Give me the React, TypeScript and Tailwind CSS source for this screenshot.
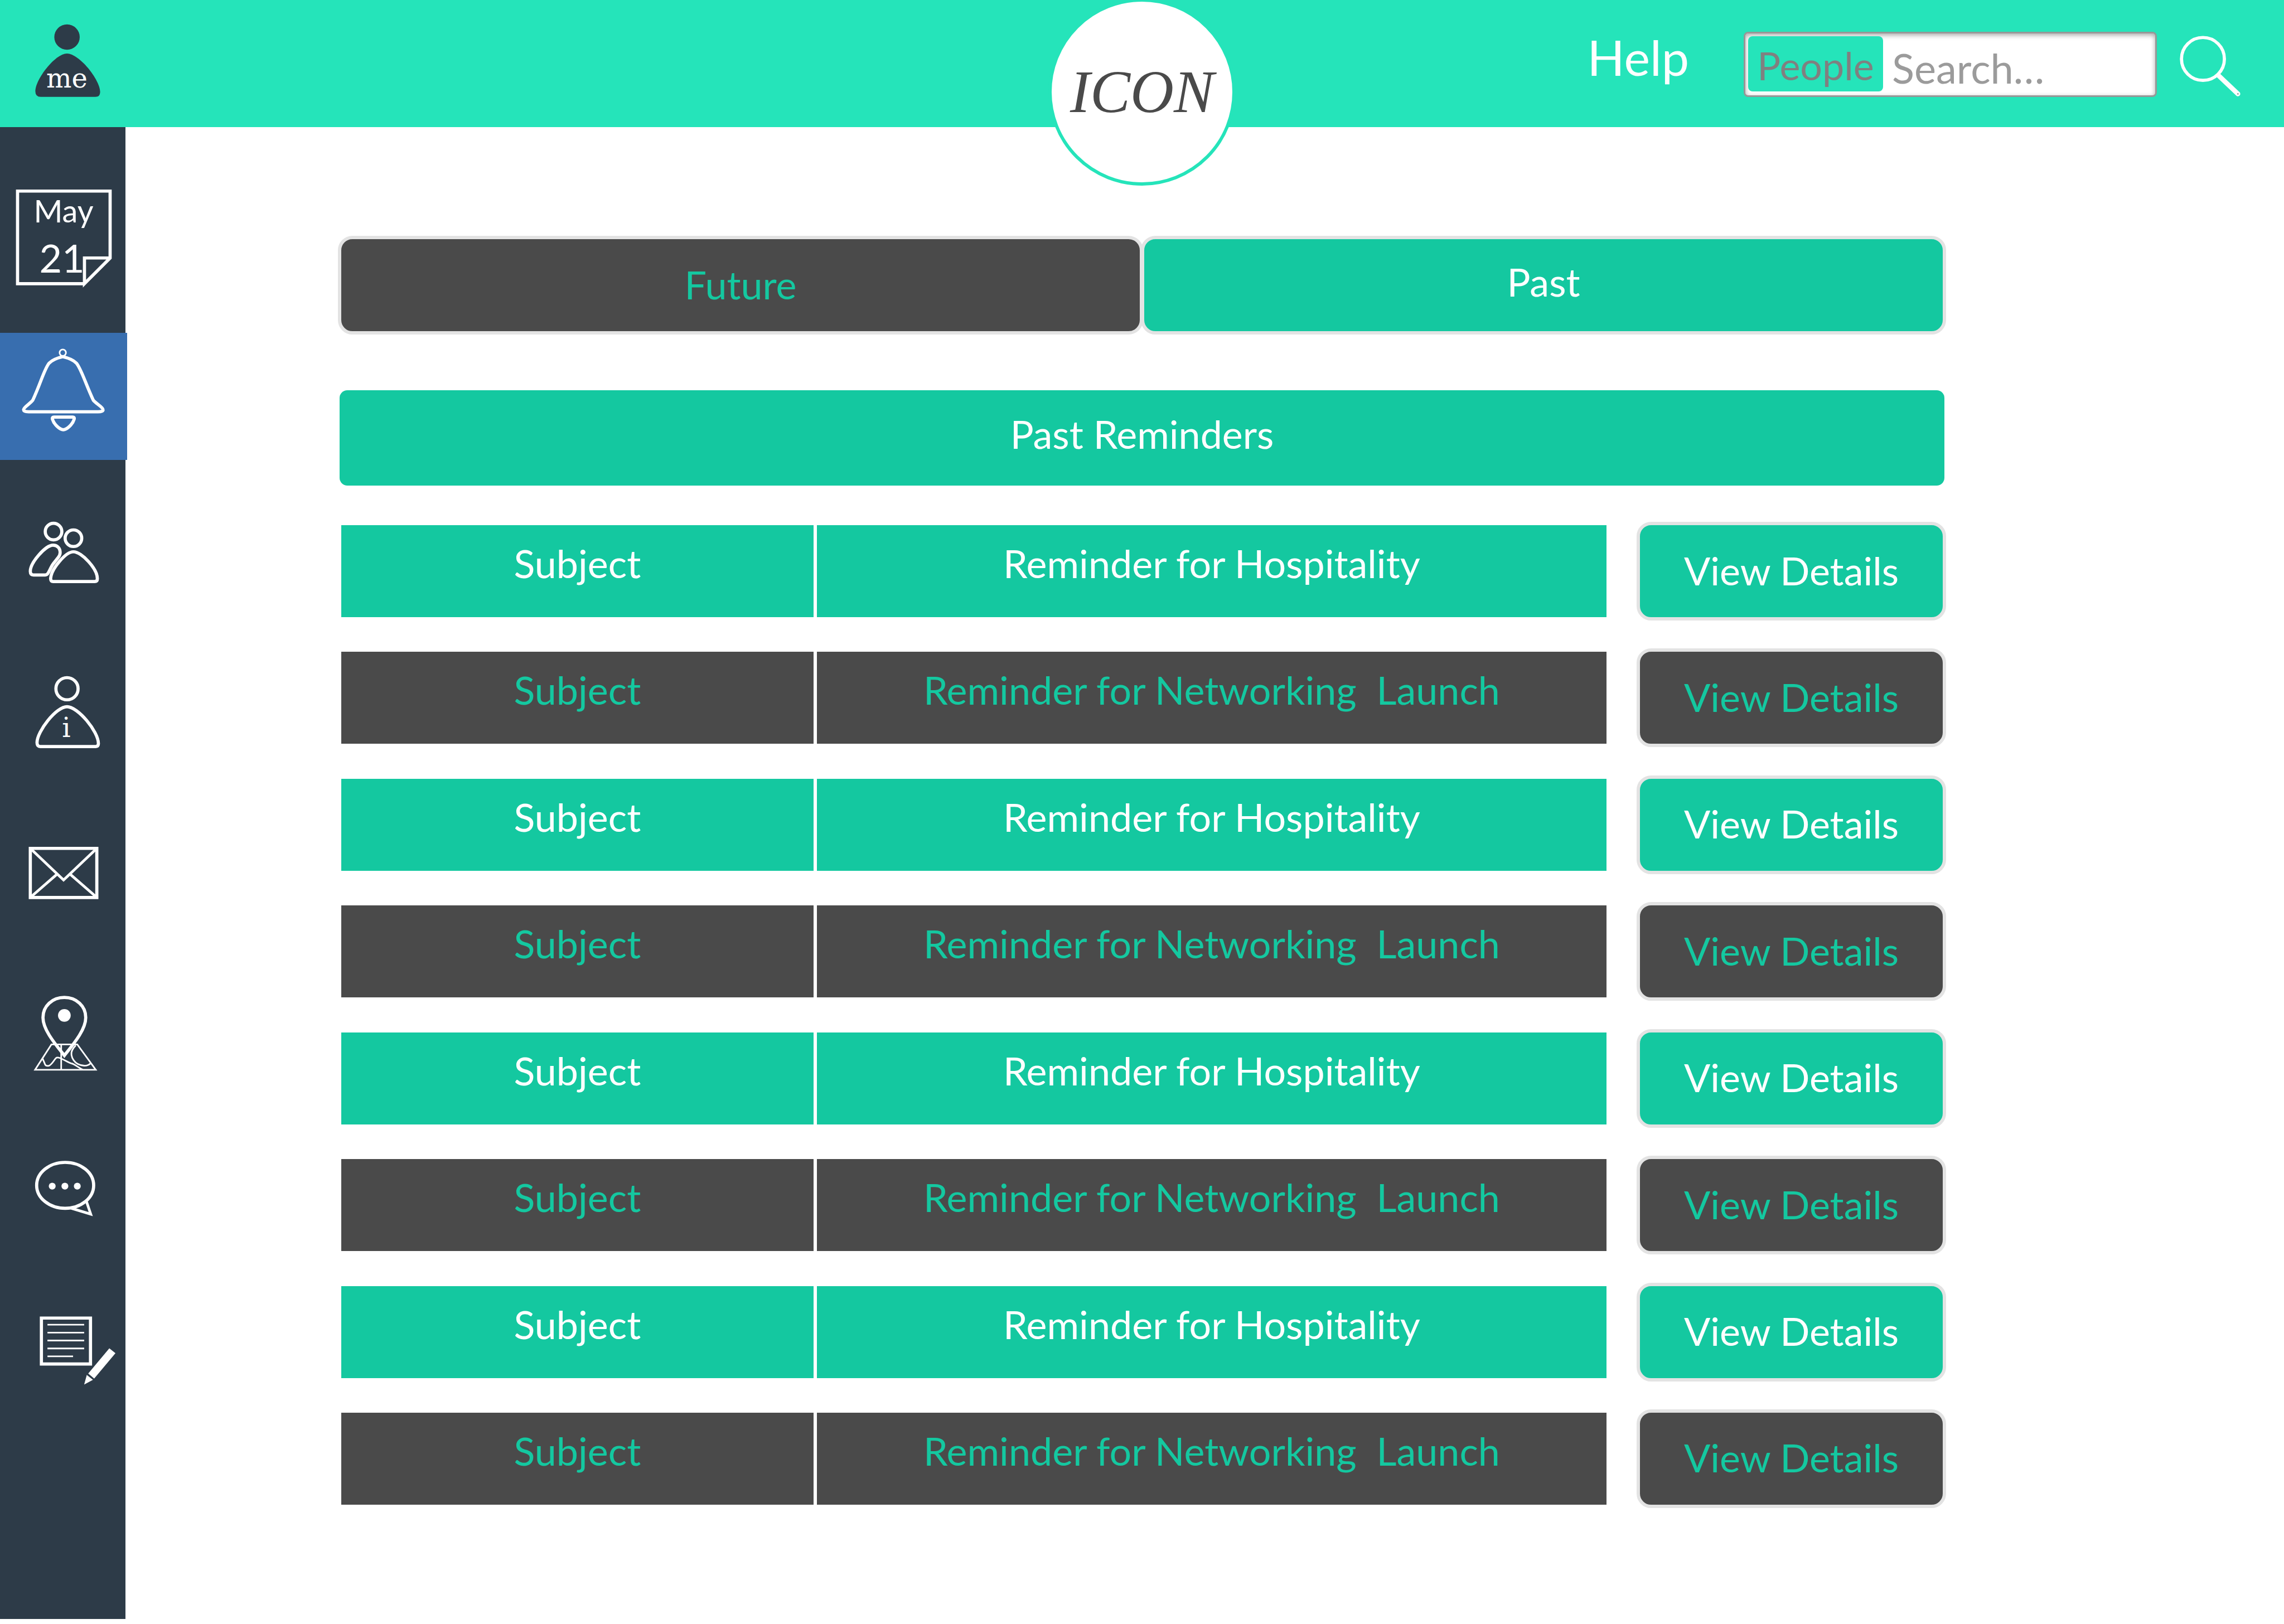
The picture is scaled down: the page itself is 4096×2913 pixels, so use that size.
import type { ReactNode } from "react";

const FUTURE = "bg-[#4a4a4a] text-[#14c8a0]";
const PAST = "bg-[#14c8a0] text-white";

const rows = Array.from({ length: 8 }, (_, i) => ({
  id: i,
  subject: "Subject",
  title: i % 2 === 0 ? "Reminder for Hospitality" : "Reminder for Networking\u00a0 Launch",
  tone: i % 2 === 0 ? PAST : FUTURE,
}));

function Icon({ box, className, children }: { box: string; className: string; children: ReactNode }) {
  return (
    <svg viewBox={box} className={className} fill="none" stroke="white" strokeWidth={6} aria-hidden="true">
      {children}
    </svg>
  );
}

function NavItem({ label, active, children }: { label: string; active?: boolean; children: ReactNode }) {
  return (
    <li className={active ? "relative h-[228px] w-[228px] bg-[#386eaf]" : "relative h-[284px] w-[228px]"}>
      <button type="button" aria-label={label} className="block h-full w-full">
        {children}
      </button>
    </li>
  );
}

function Sidebar() {
  return (
    <nav className="mb-[9px] w-[225px] shrink-0 bg-[#2d3b48]" aria-label="Main">
      <ul className="flex flex-col">
        <li className="relative h-[369px] w-[228px]">
          <button type="button" aria-label="May 21" className="block h-full w-full">
            <Icon box="0 242 240 389" className="h-[369px] w-[228px]">
              <path d="M159.5 538H33V363H208V489.5L159.5 538V489.5H208" />
            </Icon>
            <span className="absolute top-[118px] left-0 w-[228px] text-center text-[56px] leading-[64px] text-white">May</span>
            <span className="absolute top-[194px] left-0 w-[222px] text-center text-[70px] leading-[80px] text-white">21</span>
          </button>
        </li>
        <NavItem label="Reminders" active>
          <Icon box="0 630 240 240" className="h-[228px] w-[228px]">
            <circle cx="118.5" cy="667.5" r="6" strokeWidth={3} />
            <path d="M118.5 675C110 677 99 681 93 687C84 697 77 725 62 757C58 763 45 770 44.500 775Q44.500 779 54 779H185Q195 779 194.500 775C194 770 180 763 176 757C161 725 153 697 144 687C138 681 127 677 118.500 675Z" />
            <path d="M102 789H137Q141 789 140 793C137 803 126 813 119.500 813C113 813 102 803 99 793Q98 789 102 789Z" />
          </Icon>
        </NavItem>
        <NavItem label="People">
          <Icon box="0 870 240 300" className="h-[284px] w-[228px]">
            <circle cx="101" cy="1005.700" r="15.700" />
            <circle cx="138.700" cy="1018.300" r="15.700" />
            <path d="M138.700 1044C154 1044 184 1076 184 1095Q184 1100.500 179 1100.500H100.500Q95.500 1100.500 95.500 1094.500C97 1076 124 1044 138.700 1044Z" />
            <path d="M100 1031.500C86 1031.500 57 1064 57 1081Q57 1088 63 1088H85Q89 1088 91 1084C95 1077 97 1071 101 1066L110 1054.500Q113.500 1050 113.500 1045.500C113.500 1037 108 1031.500 100 1031.500Z" />
          </Icon>
        </NavItem>
        <NavItem label="Information">
          <Icon box="0 1169.500 240 300" className="h-[284px] w-[228px]">
            <circle cx="126.500" cy="1303" r="21" />
            <path d="M126.500 1337C147 1337 186 1384 186 1407Q186 1412.500 181 1412.500H76Q69.700 1412.500 69.700 1405C69.700 1384 106 1337 126.500 1337Z" />
          </Icon>
          <span className="absolute top-[164px] left-[109px] w-[20px] text-center font-['DejaVu_Serif'] text-[48px] leading-[64px] text-white">i</span>
        </NavItem>
        <NavItem label="Messages">
          <Icon box="0 1469 240 300" className="h-[284px] w-[228px]">
            <path d="M57 1605H183V1698H57Z" />
            <path d="M57 1605L120 1665L183 1605M57 1698L107.500 1654M183 1698L132.500 1654" strokeWidth={5} />
          </Icon>
        </NavItem>
        <NavItem label="Map">
          <Icon box="0 1768.500 240 300" className="h-[284px] w-[228px]">
            <path d="M121.500 1887C99 1887 81 1903 81 1925C81 1948 104 1975 121.500 1997C139 1975 162 1948 162 1925C162 1903 144 1887 121.500 1887Z" />
            <circle cx="121.500" cy="1921" r="12" fill="white" stroke="none" />
            <path
              strokeWidth={3}
              d="M97 1976H146L181 2024H66ZM115.500 1976V2024M80 2002L85 2014Q87 2018 93 2016C99 2013 103 2003 107 2001C113 1999 127 2010 135 2012C141 2013 149 2021 157 2024M143 1978C137 1984 134 1991 135 1996C136 2003 141 2010 147 2013C153 2016 164 2019 171 2012"
            />
          </Icon>
        </NavItem>
        <NavItem label="Chat">
          <Icon box="0 2068 240 300" className="h-[284px] w-[228px]">
            <ellipse cx="123" cy="2242.500" rx="54" ry="43.500" />
            <path d="M135 2286L171.500 2297L163 2272" strokeWidth={5} />
            <g fill="white" stroke="none">
              <circle cx="98.500" cy="2244" r="6.500" />
              <circle cx="122.500" cy="2244" r="6.500" />
              <circle cx="146" cy="2244" r="6.500" />
            </g>
          </Icon>
        </NavItem>
        <NavItem label="Notes">
          <Icon box="0 2367 240 300" className="h-[284px] w-[228px]">
            <path d="M78 2493H171V2580H78Z" />
            <path strokeWidth={3} d="M89.500 2505.500H159M89.500 2520.500H159M89.500 2535.500H159M89.500 2550.500H159M89.500 2565.500H138" />
            <path fill="white" stroke="none" d="M206.700 2550.300L218.300 2559.500L178 2607.700L166.700 2598ZM164 2600.800L175.700 2610L159 2619Z" />
          </Icon>
        </NavItem>
      </ul>
    </nav>
  );
}

function Header() {
  return (
    <header className="relative flex h-[228px] shrink-0 items-start justify-between bg-[#25e4ba]">
      <button type="button" aria-label="My profile" className="relative h-[228px] w-[228px]">
        <svg viewBox="0 0 240 240" className="h-[228px] w-[228px] fill-[#2d3b48]" aria-hidden="true">
          <circle cx="126.500" cy="70" r="24" />
          <path d="M126.500 101C149 101 189 150 189 174Q189 183 180 183H77Q66.700 183 66.700 172C66.700 150 104 101 126.500 101Z" />
        </svg>
        <span className="absolute top-[108px] left-[80px] w-[80px] text-center font-['DejaVu_Serif'] text-[48px] leading-[64px] text-white">me</span>
      </button>

      <div className="absolute -top-[3px] left-1/2 z-10 flex size-[336px] -translate-x-1/2 items-center justify-center rounded-full border-[6px] border-[#25e4ba] bg-white">
        <span className="font-['Liberation_Serif'] text-[108px] leading-[120px] text-[#4a4a4a] italic">ICON</span>
      </div>

      <div className="flex items-start pr-[76px]">
        <a href="#help" className="mt-[46px] mr-[98px] text-[88px] leading-[112px] text-white">
          Help
        </a>
        <form className="mt-[57px] flex h-[117px] w-[741px] items-start rounded-[8px] border-[3px] border-[#979797] bg-white p-[5px] shadow-[inset_0_3px_8px_rgba(0,0,0,0.35)]">
          <button type="button" className="h-[99px] w-[242px] shrink-0 rounded-[8px] bg-[#25e4ba] pt-[6px] text-[70px] leading-[93px] text-[#808080]">
            People
          </button>
          <input
            type="text"
            aria-label="Search"
            placeholder="Search…"
            className="ml-[16px] h-[99px] min-w-0 flex-1 bg-transparent pt-[14px] text-[74px] text-[#9b9b9b] outline-none placeholder:text-[#9b9b9b] placeholder:opacity-100"
          />
        </form>
        <button type="button" aria-label="Run search" className="mt-[62px] ml-[38px]">
          <svg viewBox="4120 65 120 120" className="size-[114px]" fill="none" stroke="white" aria-hidden="true">
            <circle cx="4167" cy="111" r="40.500" strokeWidth={6} />
            <path d="M4196 142L4233 177" strokeWidth={9} strokeLinecap="round" />
            <circle cx="4233" cy="177" r="1.500" fill="#979797" stroke="none" />
          </svg>
        </button>
      </div>
    </header>
  );
}

export default function App() {
  return (
    <div className="flex min-h-screen flex-col bg-white font-[Lato,sans-serif]">
      <Header />
      <div className="flex flex-1">
        <Sidebar />
        <main className="flex flex-1 flex-col pt-[195px] pr-[606px] pb-[208px] pl-[381px] text-[70px] leading-[84px]">
          <div role="tablist" className="flex h-[177px]">
            <button type="button" role="tab" aria-selected="false" className={`flex-1 rounded-[26px] border-[6px] border-[#e3e3e3] pb-[4px] ${FUTURE}`}>
              Future
            </button>
            <button type="button" role="tab" aria-selected="true" className={`-ml-[4px] flex-1 rounded-[26px] border-[6px] border-[#e3e3e3] pb-[14px] ${PAST}`}>
              Past
            </button>
          </div>
          <h1 className={`mx-[3px] mt-[100px] flex h-[171px] items-center justify-center rounded-[14px] pb-[16px] ${PAST}`}>Past Reminders</h1>
          <table className="mt-[65px] flex flex-1 flex-col" aria-label="Past reminders">
            <tbody className="flex flex-1 flex-col justify-between">
              {rows.map((row) => (
                <tr key={row.id} className="flex items-center">
                  <td className={`ml-[6px] h-[165px] flex-[848] pt-[26px] text-center ${row.tone}`}>{row.subject}</td>
                  <td className={`ml-[6px] h-[165px] flex-[1418] pt-[26px] text-center ${row.tone}`}>{row.title}</td>
                  <td className="ml-[54px] w-[555px]">
                    <button type="button" className={`block h-[177px] w-full rounded-[26px] border-[6px] border-[#e3e3e3] pb-[4px] ${row.tone}`}>
                      View Details
                    </button>
                  </td>
                </tr>
              ))}
            </tbody>
          </table>
        </main>
      </div>
    </div>
  );
}
